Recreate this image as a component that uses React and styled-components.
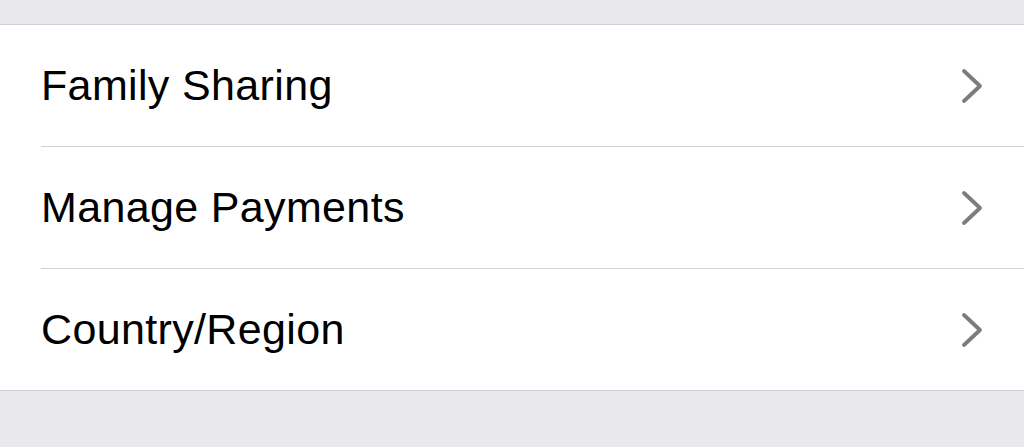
import React from 'react'
import styled, { createGlobalStyle } from 'styled-components'

const rows = ['Family Sharing', 'Manage Payments', 'Country/Region']

const Chevron = () => (
    <svg width="22" height="36" viewBox="0 0 22 36" fill="none">
        <polyline points="3,3 19,18 3,33" stroke="#7b7b80" strokeWidth="3.8" strokeLinecap="round" strokeLinejoin="round" />
    </svg>
)

const App = () => {
    return (
        <>
            <GlobalStyle />
            <Page>
                <Group>
                    {rows.map((label, i) => (
                        <Row key={label}>
                            <RowInner last={i === rows.length - 1}>
                                <Label>{label}</Label>
                                <ChevronWrap>
                                    <Chevron />
                                </ChevronWrap>
                            </RowInner>
                        </Row>
                    ))}
                </Group>
            </Page>
        </>
    )
}

export default App

const GlobalStyle = createGlobalStyle`
    html, body {
        margin: 0;
        padding: 0;
        background: #e9e8ed;
    }
`
const Page = styled.div`
    width: 1024px;
    height: 447px;
    padding-top: 24px;
    box-sizing: border-box;
    background: #e9e8ed;
    overflow: hidden;
`
const Group = styled.div`
    background: #ffffff;
    border-top: 1px solid #cfced3;
    border-bottom: 1px solid #cfced3;
`
const Row = styled.div`
    padding-left: 41px;
`
const RowInner = styled.div`
    height: 121px;
    display: flex;
    align-items: center;
    justify-content: space-between;
    padding-right: 41px;
    border-bottom: ${p => (p.last ? 'none' : '1px solid #d3d2d6')};
`
const Label = styled.div`
    font-family: "Liberation Sans", Arial, sans-serif;
    font-size: 43px;
    color: #000000;
    letter-spacing: 0.35px;
`
const ChevronWrap = styled.div`
    display: flex;
    align-items: center;
`
